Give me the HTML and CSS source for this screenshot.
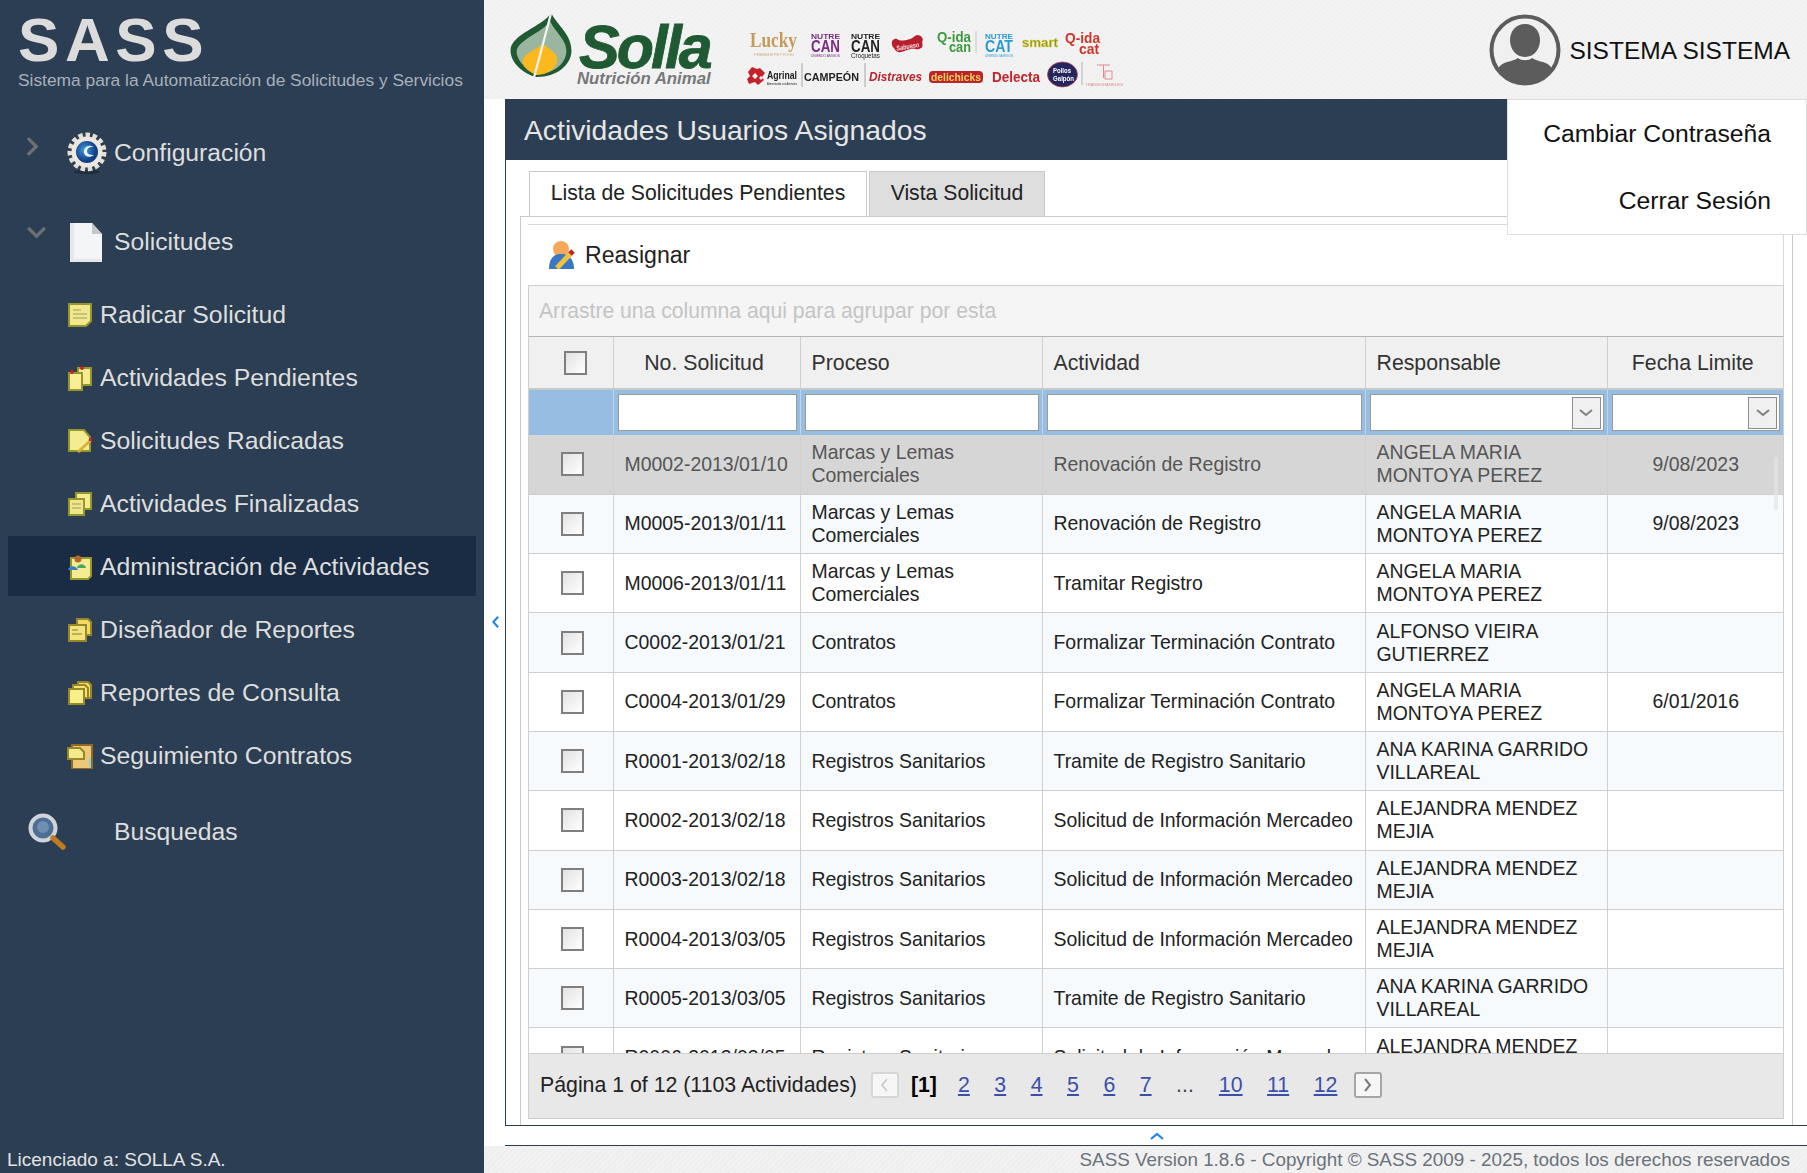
FILE: index.html
```html
<!DOCTYPE html>
<html lang="es">
<head>
<meta charset="utf-8">
<title>SASS</title>
<link rel="stylesheet" href="styles.css">
</head>
<body>
<div class="app">
  <aside class="sidebar">
    <div class="brand">
      <div class="brand-name">SASS</div>
      <div class="brand-sub">Sistema para la Automatización de Solicitudes y Servicios</div>
    </div>
    <nav class="menu">
      <div class="group group-config">
        <svg class="arrow" viewBox="0 0 14 22"><path d="M2 2l9 9-9 9" fill="none" stroke="#6d7073" stroke-width="3.6"/></svg>
        <svg class="gicon gear" viewBox="0 0 40 42"><defs><radialGradient id="blue" cx=".4" cy=".4"><stop offset="0" stop-color="#3f9be0"/><stop offset="1" stop-color="#123f86"/></radialGradient></defs><ellipse cx="20" cy="40" rx="13" ry="2" fill="#1f2c3b"/><circle cx="20" cy="20" r="17" fill="none" stroke="#e4e0d6" stroke-width="5" stroke-dasharray="4.4 2.7"/><circle cx="20" cy="20" r="15.5" fill="#ece8df"/><circle cx="20" cy="20" r="11" fill="url(#blue)"/><path d="M27 15c-5-3-11 0-10 6 1 4 6 5 10 2-4 0-7-1-7-4 0-3 4-5 7-4z" fill="#e8f2fb"/></svg>
        <span class="gtext">Configuración</span>
      </div>
      <div class="group group-sol">
        <svg class="arrow arrow-down" viewBox="0 0 22 14"><path d="M2 2l9 9 9-9" fill="none" stroke="#6d7073" stroke-width="3.6"/></svg>
        <svg class="gicon doc" viewBox="0 0 34 40"><path d="M1 7h25l7 7v26H1z" fill="#d3d4d5"/><path d="M1 1h22l10 11v25H4l-3 0z" fill="#f4f5f6"/><path d="M23 1v11h10z" fill="#c4c7c9"/><path d="M1 1v39h32v-3H5V1z" fill="#e6e7e8"/></svg>
        <span class="gtext">Solicitudes</span>
      </div>
      <a class="item"><svg class="iicon" viewBox="0 0 26 26"><path d="M2 2h22v17l-5 5H2z" fill="#f2e88d" stroke="#97962a" stroke-width="2"/><path d="M6 8h8M6 12h14M6 16h14" stroke="#b8b570" stroke-width="1.5"/></svg><span>Radicar Solicitud</span></a>
      <a class="item"><svg class="iicon" viewBox="0 0 26 26"><path d="M11 3h13v17H11z" fill="#f5ec91" stroke="#97962a" stroke-width="2"/><path d="M2 8h13v17H2z" fill="#f7ee96" stroke="#97962a" stroke-width="2"/><circle cx="15" cy="3" r="2" fill="#c9202a"/><circle cx="5" cy="7" r="2" fill="#c9202a"/></svg><span>Actividades Pendientes</span></a>
      <a class="item"><svg class="iicon" viewBox="0 0 26 26"><path d="M2 2h15l6 7v14H2z" fill="#f5ec91" stroke="#97962a" stroke-width="2"/><path d="M11 24l13-12" stroke="#d8b13a" stroke-width="3"/><path d="M22 11l3 1" stroke="#c9202a" stroke-width="3"/></svg><span>Solicitudes Radicadas</span></a>
      <a class="item"><svg class="iicon" viewBox="0 0 26 26"><path d="M9 2h15v16H9z" fill="#f5ec91" stroke="#97962a" stroke-width="2"/><path d="M2 8h15v16H2z" fill="#efe68b" stroke="#97962a" stroke-width="2"/><path d="M5 13h9M5 17h9" stroke="#b8b570" stroke-width="1.5"/></svg><span>Actividades Finalizadas</span></a>
      <a class="item active"><svg class="iicon" viewBox="0 0 26 26"><path d="M4 4h20v18l-3 3H4z" fill="#f5ec91" stroke="#97962a" stroke-width="2"/><circle cx="11" cy="5" r="3.5" fill="#b5652d"/><path d="M1 16c1-5 8-5 10 0z" fill="#3c7fc4"/><path d="M10 14c1-5 8-5 9 0z" fill="#49a764"/></svg><span>Administración de Actividades</span></a>
      <a class="item"><svg class="iicon" viewBox="0 0 26 26"><path d="M10 2h11l3 3v13H10z" fill="#f3da63" stroke="#97862a" stroke-width="2"/><path d="M2 8h17v16H2z" fill="#f3e480" stroke="#97862a" stroke-width="2"/><path d="M5 13h6M5 17h10" stroke="#b49a4e" stroke-width="1.5"/></svg><span>Diseñador de Reportes</span></a>
      <a class="item"><svg class="iicon" viewBox="0 0 26 26"><path d="M11 2h10l3 3v13H11z" fill="#f3da63" stroke="#97862a" stroke-width="2"/><path d="M6 5h12l3 3v10H6z" fill="#f4e370" stroke="#97862a" stroke-width="2"/><path d="M2 9h15v15H2z" fill="#f7ee88" stroke="#97862a" stroke-width="2"/></svg><span>Reportes de Consulta</span></a>
      <a class="item"><svg class="iicon" viewBox="0 0 26 26"><path d="M5 2h20v24H5z" fill="#edc878" stroke="#8f6a24" stroke-width="2"/><path d="M1 5h12l4 4v7H1z" fill="#f4ea8c" stroke="#97862a" stroke-width="2"/><path d="M23 15v9" stroke="#8ad0ea" stroke-width="2"/></svg><span>Seguimiento Contratos</span></a>
      <div class="group group-search">
        <svg class="search-icon" viewBox="0 0 40 40"><circle cx="16" cy="16" r="12.5" fill="#4d6f94" stroke="#cfd4d8" stroke-width="4"/><circle cx="16" cy="15" r="6" fill="#6f8fb0"/><path d="M26 26l10 9" stroke="#c07a22" stroke-width="5.5" stroke-linecap="round"/></svg>
        <span class="gtext">Busquedas</span>
      </div>
    </nav>
    <div class="license">Licenciado a: SOLLA S.A.</div>
  </aside>
  <main class="content">
    <header class="topbar">
      <svg class="solla-mark" viewBox="0 0 60 64"><path d="M40 0C32 13 0 21 0 37c0 12 12 22 24 26 20 1 36-11 36-26C60 21 46 12 40 0z" fill="#1f5a33"/><path d="M39 8C30 20 6 27 6 38c0 8 7 15 14 19l8 3c15-1 27-10 27-23C55 26 44 19 39 8z" fill="#9ab5a0"/><path d="M32 30C24 37 12 40 12 48c0 6 7 10 13 13 11 0 21-6 21-15 0-7-8-10-14-16z" fill="#fbb91f"/><path d="M40 0L23 64" stroke="#f3f3f3" stroke-width="2.2"/></svg>
      <div class="solla-type"><span class="solla-name">Solla</span><span class="solla-tag">Nutrición Animal</span></div>
      <svg class="brands" viewBox="740 25 390 70">
        <text x="750" y="47" textLength="47" lengthAdjust="spacingAndGlyphs" class="b-lucky">Lucky</text>
        <text x="754" y="55.5" textLength="40" lengthAdjust="spacingAndGlyphs" class="b-micro b-gold">PREMIUM PET FOOD</text>

        <text x="811" y="38.5" textLength="29" lengthAdjust="spacingAndGlyphs" class="b-nc b-purple">NUTRE</text>
        <text x="811" y="52" textLength="29" lengthAdjust="spacingAndGlyphs" class="b-can b-purple">CAN</text>
        <text x="811" y="56.5" textLength="29" lengthAdjust="spacingAndGlyphs" class="b-micro b-purple">UNIENDO AMIGOS</text>

        <text x="851" y="38.5" textLength="29" lengthAdjust="spacingAndGlyphs" class="b-nc">NUTRE</text>
        <text x="851" y="52" textLength="29" lengthAdjust="spacingAndGlyphs" class="b-can">CAN</text>
        <text x="851" y="58" textLength="29" lengthAdjust="spacingAndGlyphs" class="b-tiny">Croquetas</text>

        <path d="M892 44c-1-3 2-6 5-5 3 2 6 2 13 0 4-1 4-4 8-4 4 1 6 4 4 7 1 3 1 6-3 7-3 1-4-1-8 0-6 1-9 4-13 3-3-1-3-3-4-4-2-1-2-3-2-4z" fill="#b81f2c"/>
        <text x="896" y="49" textLength="23" lengthAdjust="spacingAndGlyphs" transform="rotate(-10 907 45)" class="b-sab">Sabueso</text>

        <text x="937" y="42" textLength="34" lengthAdjust="spacingAndGlyphs" class="b-q b-green">Q-ida</text>
        <text x="949" y="52" textLength="22" lengthAdjust="spacingAndGlyphs" class="b-q2 b-green">can</text>
        <path d="M976 31v22" stroke="#c4c4c4"/>

        <text x="985" y="38.5" textLength="28" lengthAdjust="spacingAndGlyphs" class="b-nc b-blue">NUTRE</text>
        <text x="985" y="52" textLength="28" lengthAdjust="spacingAndGlyphs" class="b-can b-blue">CAT</text>
        <text x="985" y="56.5" textLength="28" lengthAdjust="spacingAndGlyphs" class="b-micro b-blue">UNIENDO AMIGOS</text>

        <text x="1022" y="47" textLength="36" lengthAdjust="spacingAndGlyphs" class="b-smart">smart</text>

        <text x="1065" y="42.5" textLength="35" lengthAdjust="spacingAndGlyphs" class="b-q b-red">Q-ida</text>
        <text x="1079" y="54" textLength="20" lengthAdjust="spacingAndGlyphs" class="b-q2 b-red">cat</text>

        <path d="M752 67l5 2 3-1 5 5-3 4 2 3-6 5-3-3-6 2-2-5 3-3-2-4z" fill="#c4222b"/><path d="M755 73l3 3-3 3-3-3zM761 76l2 2-2 2-2-2z" fill="#f2f2f2"/>
        <text x="767" y="79" textLength="30" lengthAdjust="spacingAndGlyphs" class="b-agr">Agrinal</text>
        <text x="767" y="84.5" textLength="30" lengthAdjust="spacingAndGlyphs" class="b-micro">Alimentando sus Animales</text>
        <path d="M802 63v24" stroke="#a8a8a8"/>
        <text x="804" y="81" textLength="55" lengthAdjust="spacingAndGlyphs" class="b-camp">CAMPEÓN</text>
        <path d="M865 63v24" stroke="#a8a8a8"/>
        <text x="869" y="81" textLength="53" lengthAdjust="spacingAndGlyphs" class="b-dist">Distraves</text>
        <rect x="929" y="71" width="54" height="12" rx="4" fill="#b8262b"/>
        <text x="931" y="81" textLength="50" lengthAdjust="spacingAndGlyphs" class="b-deli">delichicks</text>
        <text x="992" y="82" textLength="48" lengthAdjust="spacingAndGlyphs" class="b-delecta">Delecta</text>
        <ellipse cx="1062.5" cy="74.5" rx="15" ry="12.5" fill="#26265f" stroke="#b9434f" stroke-width=".8"/>
        <text x="1053" y="73" textLength="18" lengthAdjust="spacingAndGlyphs" class="b-pollos">Pollos</text>
        <text x="1053" y="81" textLength="21" lengthAdjust="spacingAndGlyphs" class="b-pollos">Galpón</text>
        <path d="M1082 62v23" stroke="#b5b5b5"/>
        <path d="M1097 65h13M1103.500 65v13M1112 71h-7v8h7v-8" fill="none" stroke="#e08a8e" stroke-width="1"/>
        <text x="1085" y="86" textLength="38" lengthAdjust="spacingAndGlyphs" class="b-trans">TRANSGRANELES</text>
      </svg>
      <div class="user"><svg class="avatar" viewBox="0 0 72 72"><circle cx="36" cy="36" r="33.5" fill="#f0f0f0" stroke="#5c5c5c" stroke-width="4"/><path d="M36 10c9 0 15 7 15 16 0 8-5 17-15 17s-15-9-15-17c0-9 6-16 15-16z" fill="#5c5c5c"/><path d="M9 55c3-8 15-7 20-11 3 3 11 3 14 0 5 4 17 3 20 11-6 9-16 15-27 15S15 64 9 55z" fill="#5c5c5c"/></svg><span class="user-name">SISTEMA SISTEMA</span></div>
    </header>
    <section class="page">
      <h1 class="title">Actividades Usuarios Asignados</h1>
      <div class="tabs"><div class="tab tab-on">Lista de Solicitudes Pendientes</div><div class="tab tab-off">Vista Solicitud</div></div>
      <div class="panel">
        <div class="panel-inner">
          <div class="toolbar">
            <svg class="reassign" viewBox="0 0 28 30"><circle cx="13" cy="9" r="8" fill="#f5a85c"/><path d="M1 29c0-11 5-15 12-15s13 4 13 15z" fill="#3a77c7"/><path d="M9 28l14-15" stroke="#f0c33c" stroke-width="5"/><path d="M22 14l3-3" stroke="#c4222b" stroke-width="5"/></svg>
            <span>Reasignar</span>
          </div>
          <div class="grid">
            <div class="group-panel">Arrastre una columna aqui para agrupar por esta</div>
            <div class="table-wrap">
              <table class="table">
                <colgroup><col class="c1"><col class="c2"><col class="c3"><col class="c4"><col class="c5"><col class="c6"></colgroup>
                <thead>
                  <tr class="head">
                    <th><span class="check check-head"></span></th><th class="ctr">No. Solicitud</th><th>Proceso</th><th>Actividad</th><th>Responsable</th><th class="ctr">Fecha Limite</th>
                  </tr>
                  <tr class="filter">
                    <td></td>
                    <td><div class="fbox"></div></td>
                    <td><div class="fbox"></div></td>
                    <td><div class="fbox"></div></td>
                    <td><div class="fbox"><span class="ddl"><svg viewBox="0 0 14 8"><path d="M1 1l6 5 6-5" fill="none" stroke="#808080" stroke-width="2"/></svg></span></div></td>
                    <td><div class="fbox"><span class="ddl"><svg viewBox="0 0 14 8"><path d="M1 1l6 5 6-5" fill="none" stroke="#808080" stroke-width="2"/></svg></span></div></td>
                  </tr>
                </thead>
                <tbody>
                  <tr class="row sel"><td><span class="check"></span></td><td>M0002-2013/01/10</td><td>Marcas y Lemas Comerciales</td><td>Renovación de Registro</td><td>ANGELA MARIA MONTOYA PEREZ</td><td class="ctr">9/08/2023</td></tr>
                  <tr class="row alt"><td><span class="check"></span></td><td>M0005-2013/01/11</td><td>Marcas y Lemas Comerciales</td><td>Renovación de Registro</td><td>ANGELA MARIA MONTOYA PEREZ</td><td class="ctr">9/08/2023</td></tr>
                  <tr class="row"><td><span class="check"></span></td><td>M0006-2013/01/11</td><td>Marcas y Lemas Comerciales</td><td>Tramitar Registro</td><td>ANGELA MARIA MONTOYA PEREZ</td><td></td></tr>
                  <tr class="row alt"><td><span class="check"></span></td><td>C0002-2013/01/21</td><td>Contratos</td><td>Formalizar Terminación Contrato</td><td>ALFONSO VIEIRA GUTIERREZ</td><td></td></tr>
                  <tr class="row"><td><span class="check"></span></td><td>C0004-2013/01/29</td><td>Contratos</td><td>Formalizar Terminación Contrato</td><td>ANGELA MARIA MONTOYA PEREZ</td><td class="ctr">6/01/2016</td></tr>
                  <tr class="row alt"><td><span class="check"></span></td><td>R0001-2013/02/18</td><td>Registros Sanitarios</td><td>Tramite de Registro Sanitario</td><td>ANA KARINA GARRIDO VILLAREAL</td><td></td></tr>
                  <tr class="row"><td><span class="check"></span></td><td>R0002-2013/02/18</td><td>Registros Sanitarios</td><td>Solicitud de Información Mercadeo</td><td>ALEJANDRA MENDEZ MEJIA</td><td></td></tr>
                  <tr class="row alt"><td><span class="check"></span></td><td>R0003-2013/02/18</td><td>Registros Sanitarios</td><td>Solicitud de Información Mercadeo</td><td>ALEJANDRA MENDEZ MEJIA</td><td></td></tr>
                  <tr class="row"><td><span class="check"></span></td><td>R0004-2013/03/05</td><td>Registros Sanitarios</td><td>Solicitud de Información Mercadeo</td><td>ALEJANDRA MENDEZ MEJIA</td><td></td></tr>
                  <tr class="row alt"><td><span class="check"></span></td><td>R0005-2013/03/05</td><td>Registros Sanitarios</td><td>Tramite de Registro Sanitario</td><td>ANA KARINA GARRIDO VILLAREAL</td><td></td></tr>
                  <tr class="row"><td><span class="check"></span></td><td>R0006-2013/03/05</td><td>Registros Sanitarios</td><td>Solicitud de Información Mercadeo</td><td>ALEJANDRA MENDEZ MEJIA</td><td></td></tr>
                </tbody>
              </table>
            </div>
            <div class="pager">
              <span class="pinfo">Página 1 of 12 (1103 Actividades)</span>
              <span class="pbtn pbtn-off"><svg viewBox="0 0 8 14"><path d="M6.5 1L1.5 7l5 6" fill="none" stroke="#c9c9c9" stroke-width="1.6"/></svg></span>
              <b class="pcur">[1]</b>
              <a class="pnum">2</a><a class="pnum">3</a><a class="pnum">4</a><a class="pnum">5</a><a class="pnum">6</a><a class="pnum">7</a>
              <span class="pdots">...</span>
              <a class="pnum pwide">10</a><a class="pnum pwide">11</a><a class="pnum pwide">12</a>
              <span class="pbtn"><svg viewBox="0 0 8 14"><path d="M1.5 1l5 6-5 6" fill="none" stroke="#7a7a7a" stroke-width="2"/></svg></span>
            </div>
          </div>
        </div>
      </div>
      <div class="collapse-row"><svg viewBox="0 0 14 8"><path d="M1 7l6-5 6 5" fill="none" stroke="#1e86ea" stroke-width="2.2"/></svg></div>
    </section>
    <footer class="footer">SASS Version 1.8.6 - Copyright © SASS 2009 - 2025, todos los derechos reservados</footer>
    <svg class="collapse-left" viewBox="0 0 8 14"><path d="M7 1L1.5 7 7 13" fill="none" stroke="#1e86ea" stroke-width="2.4"/></svg>
    <div class="dropdown"><a>Cambiar Contraseña</a><a>Cerrar Sesión</a></div>
  </main>
</div>
</body>
</html>
```
FILE: styles.css
```css
* { box-sizing: border-box; }
html, body { margin: 0; height: 100%; overflow: hidden; }
body { font-family: "Liberation Sans", Arial, sans-serif; color: #000; background: #fff; }
.app { display: flex; width: 1807px; height: 1173px; }

.sidebar { width: 484px; flex: none; background: #2c3e53; display: flex; flex-direction: column; color: #dfdfdf; }
.brand { height: 99px; padding: 9px 0 0 18px; }
.brand-name { font-size: 62px; font-weight: bold; line-height: 61px; letter-spacing: 5.6px; color: #dcdcdc; }
.brand-sub { font-size: 17.37px; line-height: 20px; color: #a7b0bb; }
.menu { flex: 1; display: flex; flex-direction: column; }
.group { display: flex; align-items: center; font-size: 24.7px; }
.gtext { color: #dedede; }
.group-config { height: 64px; margin-top: 22px; padding-left: 26px; }
.group-sol { height: 64px; margin-top: 25px; padding-left: 26px; }
.arrow { width: 13px; height: 21px; margin-top: -14px; flex: none; }
.arrow-down { width: 21px; height: 13px; margin-top: -20px; }
.gicon { flex: none; }
.gear { width: 40px; height: 42px; margin-left: 28px; margin-right: 7px; }
.doc { width: 34px; height: 40px; margin-left: 22px; margin-right: 11px; }
.item { display: flex; align-items: center; height: 60px; margin: 0 8px 3px; padding: 1px 0 0 59px; font-size: 24.8px; color: #dedede; }
.group-sol + .item { margin-top: 10px; }
.iicon { width: 26px; height: 26px; margin-right: 7px; flex: none; }
.active { background: #192c44; }
.group-search { padding-left: 27px; height: 64px; margin-top: 12px; }
.search-icon { width: 40px; height: 40px; flex: none; margin-right: 47px; }
.license { height: 27px; padding-left: 7px; font-size: 19px; line-height: 27px; color: #e3e3e3; }

.content { position: relative; flex: 1; display: flex; flex-direction: column; min-width: 0; }
.topbar { height: 99px; flex: none; background: repeating-linear-gradient(135deg, #f3f3f3 0 2px, #f0f0f0 2px 4px); display: flex; align-items: flex-start; position: relative; }
.solla-mark { width: 62px; height: 65px; margin: 13px 0 0 26px; flex: none; }
.solla-type { width: 140px; margin-left: 7px; display: flex; flex-direction: column; }
.solla-name { font-size: 61px; line-height: 56px; margin-top: 19px; font-weight: bold; font-style: italic; color: #1f5a33; letter-spacing: -3px; -webkit-text-stroke: .8px #1f5a33; }
.solla-tag { font-size: 16.8px; line-height: 14px; margin: -3px 0 0 -2px; font-weight: bold; font-style: italic; color: #77787a; white-space: nowrap; }
.brands { width: 390px; height: 70px; margin: 25px 0 0 21px; flex: none; filter: blur(.35px); }
.brands text { font-family: "Liberation Sans", sans-serif; font-weight: bold; fill: #222; }
.brands .b-lucky { font-family: "Liberation Serif", serif; font-size: 22px; fill: #c49b5b; }
.brands .b-gold { fill: #c9ab79; }
.brands .b-micro { font-size: 3.5px; font-weight: normal; }
.brands .b-nc { font-size: 8px; }
.brands .b-can { font-size: 16px; }
.brands .b-tiny { font-size: 7px; font-weight: normal; }
.brands .b-purple { fill: #7a2a83; }
.brands .b-blue { fill: #2a9bd2; }
.brands .b-green { fill: #3d9a3f; }
.brands .b-red { fill: #d0352a; }
.brands .b-q { font-size: 15px; }
.brands .b-q2 { font-size: 14px; }
.brands .b-sab { font-size: 7px; fill: #f7e3e3; font-style: italic; }
.brands .b-smart { font-size: 12px; fill: #7f9a2a; stroke: #e3c93c; stroke-width: .5px; }
.brands .b-agr { font-size: 11px; }
.brands .b-camp { font-size: 11.5px; }
.brands .b-dist { font-size: 13px; fill: #b8262b; font-style: italic; }
.brands .b-deli { font-size: 11.5px; fill: #f2d05a; }
.brands .b-delecta { font-size: 14px; fill: #c4222b; }
.brands .b-pollos { font-size: 6.5px; fill: #fff; }
.brands .b-trans { font-size: 4px; fill: #de8b8f; font-weight: normal; }
.user { position: absolute; right: 17px; top: 13px; display: flex; align-items: center; gap: 8px; font-size: 24.5px; line-height: 72px; color: #111; }
.user-name { padding-top: 2px; }
.avatar { width: 72px; height: 72px; flex: none; }

.page { flex: 1; min-height: 0; margin-left: 21px; display: flex; flex-direction: column; }
.title { margin: 0; height: 61px; flex: none; background: #2c3e53; color: #e6e6e6; font-weight: normal; font-size: 28.3px; line-height: 62px; padding-left: 19px; }
.tabs { height: 56px; flex: none; display: flex; align-items: flex-end; padding-left: 23px; border-left: 1px solid #2c3e53; gap: 2px; }
.tab { height: 45px; border: 1px solid #c9c9c9; border-bottom: 0; font-size: 21.2px; line-height: 42px; text-align: center; color: #222; white-space: nowrap; }
.tab-on { width: 338px; background: #fff; }
.tab-off { width: 176px; background: #dedede; }
.panel { flex: 1; min-height: 0; border-left: 1px solid #2c3e53; border-bottom: 1px solid #2c3e53; padding: 0 14px 0 14px; }
.panel-inner { height: 100%; border: 1px solid #c9c9c9; border-bottom: 0; padding: 7px 8px 5px 7px; }
.toolbar { height: 61px; border-top: 1px solid #d9d9d9; border-right: 1px solid #d9d9d9; display: flex; align-items: center; gap: 9px; padding-left: 20px; font-size: 23.1px; color: #222; }
.reassign { width: 28px; height: 30px; flex: none; }
.grid { height: 834px; border: 1px solid #cfcfcf; display: flex; flex-direction: column; }
.group-panel { height: 51px; flex: none; background: #f5f5f5; color: #c4c4c4; font-size: 21.15px; line-height: 50px; padding-left: 10px; border-bottom: 1px solid #b5b5b5; }
.table-wrap { flex: 1; min-height: 0; overflow: hidden; position: relative; }
.table-wrap::after { content: ""; position: absolute; right: 5px; top: 120px; height: 53px; width: 4px; background: #e4e4e4; opacity: .7; }
.table { width: 100%; border-collapse: collapse; table-layout: fixed; }
.c1 { width: 84px; } .c2 { width: 187px; } .c3 { width: 242px; } .c4 { width: 323px; } .c5 { width: 242px; }
.head th { height: 52px; background: #f0f0f0; font-weight: normal; font-size: 21.3px; line-height: 26px; padding: 1px 11px 0; color: #333; text-align: left; border-right: 1px solid #cfcfcf; border-bottom: 2px solid #c8c8c8; }
.head th:last-child { border-right: 0; }
.head th.ctr { text-align: center; padding-right: 16px; }
td.ctr { text-align: center; }
.filter td { height: 46px; background: #96bde2; padding: 0 3px 0 4px; border-right: 1px solid #c5d4e4; }
.filter td:last-child { border-right: 0; }
.fbox { height: 37px; background: #fff; border: 1px solid #9a9a9a; position: relative; }
.ddl { position: absolute; right: 2px; top: 2px; width: 29px; height: 32px; border: 1px solid #8d8d8d; background: #f0f0f0; display: flex; align-items: center; justify-content: center; }
.ddl svg { width: 14px; height: 8px; }
.row td { height: 59.3px; font-size: 19.45px; line-height: 23px; color: #222; padding: 0 10px 0 11px; border-right: 1px solid #d0d0d0; border-bottom: 1px solid #cfcfcf; }
.row td:first-child { padding: 0 0 0 32px; }
.row td:last-child { border-right: 0; }
.alt td { background: #f6fafd; }
.sel td { background: #d6d6d6; color: #555; }
.check { display: block; width: 23px; height: 24px; border: 2px solid #7f7f7f; background: linear-gradient(135deg, #e2e2e2, #fff); }
.check-head { margin: 0 auto 0 23px; }
.head th:first-child { padding: 0 0 0 12px; }
.pager { height: 65px; flex: none; background: #e8e8e8; border-top: 1px solid #cfcfcf; display: flex; align-items: center; padding: 0 0 2px 11px; font-size: 21.3px; color: #222; }
.pinfo { margin-right: 14px; }
.pbtn { width: 28px; height: 26px; border: 2px solid #a5a5a5; border-radius: 3px; background: #f6f6f6; display: flex; align-items: center; justify-content: center; box-shadow: inset 0 0 2px #fff; }
.pbtn-off { border-color: #d6d6d6; }
.pbtn svg { width: 9px; height: 14px; }
.pcur { margin: 0 21px 0 12px; color: #000; }
.pnum { color: #3a4fa8; text-decoration: underline; margin-right: 24.5px; }
.pwide { margin-right: 24.5px; }
.pdots { margin: 0 25px 0 0; color: #444; }
.pwide + .pbtn { margin-left: -8px; }
.collapse-row { height: 20px; flex: none; display: flex; align-items: center; justify-content: center; padding-left: 2px; border-bottom: 1px solid #2c3e53; }
.collapse-row svg { width: 14px; height: 8px; }
.footer { height: 27px; flex: none; background: repeating-linear-gradient(135deg, #f2f2f2 0 2px, #eeeeee 2px 4px); text-align: right; padding-right: 17px; font-size: 18.85px; line-height: 27px; color: #6a727c; }
.collapse-left { position: absolute; left: 8px; top: 615px; width: 7px; height: 14px; }
.dropdown { position: absolute; right: 0; top: 99px; width: 300px; height: 136px; background: #fff; border: 1px solid #dedede; display: flex; flex-direction: column; padding-right: 35px; font-size: 24.7px; text-align: right; color: #111; }
.dropdown a { height: 67px; line-height: 67px; }
```
